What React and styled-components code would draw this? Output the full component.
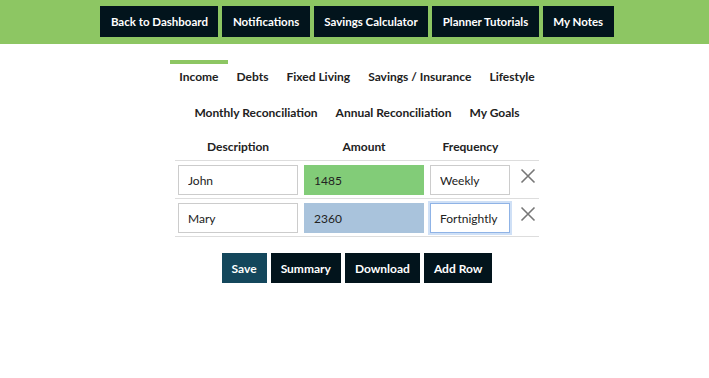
import React, { useState } from "react";
import styled, { createGlobalStyle } from "styled-components";

const GlobalStyle = createGlobalStyle`
  body {
    margin: 0;
    background: #fff;
    font-family: Lato, "Noto Sans", sans-serif;
    color: #222;
  }
`;

const TopBar = styled.header`
  background: #8dc663;
  height: 44px;
  padding: 6px 0 0 5px;
  box-sizing: border-box;
  display: flex;
  justify-content: center;
  gap: 4px;
`;

const TopButton = styled.button`
  height: 31px;
  padding: 0 10.5px;
  border: none;
  background: #02141c;
  color: #fff;
  font-family: inherit;
  font-size: 11.5px;
  font-weight: 700;
  cursor: pointer;
`;

const Main = styled.main`
  display: flex;
  flex-direction: column;
  align-items: center;
  padding: 16px 0 0 5px;
`;

const Tabs = styled.nav`
  width: 380px;
  display: flex;
  flex-wrap: wrap;
  justify-content: center;
`;

const Tab = styled.a`
  display: block;
  border-top: 4px solid ${(p) => (p.$active ? "#8dc663" : "transparent")};
  padding: 5px 9px 11px;
  line-height: 16px;
  font-size: 12px;
  font-weight: 700;
  color: #222;
  cursor: pointer;
`;

const Table = styled.table`
  border-collapse: collapse;
  font-size: 12px;
`;

const Th = styled.th`
  height: 28px;
  padding: 0;
  font-weight: 700;
  text-align: center;
  width: ${(p) => p.$w}px;
`;

const Row = styled.tr`
  border-top: 1px solid #ddd;
  border-bottom: 1px solid #ddd;
`;

const Td = styled.td`
  padding: 4px 3px 3px;
  vertical-align: top;
`;

const Field = styled.input`
  display: block;
  box-sizing: border-box;
  width: ${(p) => p.$w}px;
  height: 30px;
  padding: 0 9px;
  border: 1px solid ${(p) => (p.$focus ? "#8fb3e6" : p.$bg ? p.$bg : "#ccc")};
  box-shadow: ${(p) => (p.$focus ? "0 0 0 2px #cfe0f6" : "none")};
  background: ${(p) => p.$bg || "#fff"};
  font-family: inherit;
  font-size: 12px;
  color: #222;
  outline: none;
`;

const Remove = styled.button`
  display: flex;
  align-items: flex-start;
  height: 30px;
  border: none;
  background: none;
  padding: 3px 0 0 3px;
  cursor: pointer;
`;

const Actions = styled.div`
  display: flex;
  gap: 4px;
  margin-top: 16px;
`;

const ActionButton = styled.button`
  height: 30px;
  padding: 0 10px;
  border: none;
  background: ${(p) => (p.$primary ? "#14475c" : "#02141c")};
  color: #fff;
  font-family: inherit;
  font-size: 12px;
  font-weight: 700;
  cursor: pointer;
`;

const CloseIcon = () => (
  <svg width="16" height="16" viewBox="0 0 16 16">
    <path d="M1.5 1.5 L14.5 14.5 M14.5 1.5 L1.5 14.5" stroke="#777" strokeWidth="1.6" fill="none" />
  </svg>
);

const navItems = ["Back to Dashboard", "Notifications", "Savings Calculator", "Planner Tutorials", "My Notes"];
const tabs = [
  "Income",
  "Debts",
  "Fixed Living",
  "Savings / Insurance",
  "Lifestyle",
  "Monthly Reconciliation",
  "Annual Reconciliation",
  "My Goals",
];

export default function App() {
  const [rows] = useState([
    { name: "John", amount: "1485", freq: "Weekly", color: "#82cc78" },
    { name: "Mary", amount: "2360", freq: "Fortnightly", color: "#a9c3dc", focus: true },
  ]);

  return (
    <>
      <GlobalStyle />
      <TopBar>
        {navItems.map((n) => (
          <TopButton key={n}>{n}</TopButton>
        ))}
      </TopBar>
      <Main>
        <Tabs>
          {tabs.map((t) => (
            <Tab key={t} $active={t === "Income"}>
              {t}
            </Tab>
          ))}
        </Tabs>
        <Table>
          <thead>
            <tr>
              <Th $w={126}>Description</Th>
              <Th $w={126}>Amount</Th>
              <Th $w={87}>Frequency</Th>
              <Th $w={25}></Th>
            </tr>
          </thead>
          <tbody>
            {rows.map((r) => (
              <Row key={r.name}>
                <Td>
                  <Field $w={120} defaultValue={r.name} />
                </Td>
                <Td>
                  <Field $w={120} $bg={r.color} defaultValue={r.amount} />
                </Td>
                <Td>
                  <Field $w={80} $focus={r.focus} defaultValue={r.freq} />
                </Td>
                <Td>
                  <Remove>
                    <CloseIcon />
                  </Remove>
                </Td>
              </Row>
            ))}
          </tbody>
        </Table>
        <Actions>
          <ActionButton $primary>Save</ActionButton>
          <ActionButton>Summary</ActionButton>
          <ActionButton>Download</ActionButton>
          <ActionButton>Add Row</ActionButton>
        </Actions>
      </Main>
    </>
  );
}
